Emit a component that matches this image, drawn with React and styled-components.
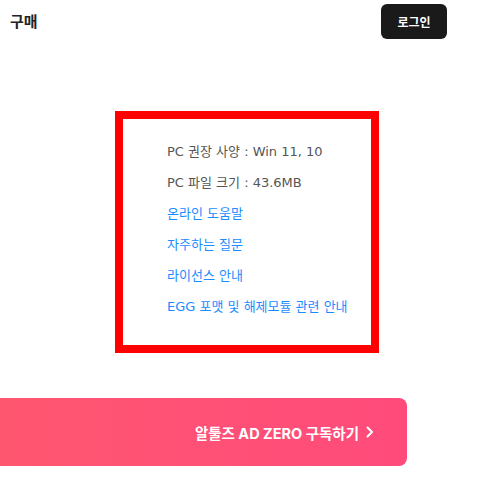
import React from 'react'
import styled, { createGlobalStyle } from 'styled-components'

const GlobalStyle = createGlobalStyle`
  body {
    margin: 0;
    background: #ffffff;
    font-family: "Inter", "Noto Sans CJK KR", sans-serif;
  }
`

const Page = styled.div`
  width: 481px;
  height: 501px;
  display: flex;
  flex-direction: column;
`

const Header = styled.header`
  height: 44px;
  padding: 4px 34px 0 10px;
  box-sizing: border-box;
  display: flex;
  align-items: flex-start;
  justify-content: space-between;
`

const Title = styled.h1`
  margin: 9px 0 0;
  font-size: 15px;
  font-weight: 700;
  color: #222;
  line-height: 18px;
`

const LoginButton = styled.button`
  width: 66px;
  height: 35px;
  border: 0;
  border-radius: 6px;
  background: #1a1a1a;
  color: #fff;
  font-family: inherit;
  font-size: 12px;
  font-weight: 700;
  cursor: pointer;
`

const InfoBox = styled.div`
  margin: 67px 0 0 115px;
  width: 264px;
  height: 242px;
  box-sizing: border-box;
  border: 8px solid #ff0000;
  padding: 23px 0 0 44px;
`

const InfoList = styled.ul`
  list-style: none;
  margin: 0;
  padding: 0;
  display: flex;
  flex-direction: column;
  gap: 11px;
`

const Item = styled.li`
  font-family: "DejaVu Sans", "Noto Sans CJK KR", sans-serif;
  font-size: 13px;
  line-height: 20px;
  color: ${p => (p.$link ? '#1a8cff' : '#555')};
  white-space: nowrap;
`

const Subscribe = styled.button`
  margin-top: 45px;
  width: 407px;
  height: 68px;
  border: 0;
  border-radius: 0 8px 8px 0;
  background: linear-gradient(90deg, #ff5670 0%, #ff4b7b 100%);
  color: #fff;
  font-family: inherit;
  font-size: 14.5px;
  font-weight: 700;
  display: flex;
  align-items: center;
  justify-content: flex-end;
  gap: 7px;
  padding: 0 33px 0 0;
  cursor: pointer;
`

const Chevron = () => (
  <svg width="8" height="12" viewBox="0 0 8 12" fill="none">
    <path d="M1.5 1.5L6 6l-4.5 4.5" stroke="#fff" strokeWidth="2" strokeLinecap="round" strokeLinejoin="round" />
  </svg>
)

const items = [
  { text: 'PC 권장 사양 : Win 11, 10' },
  { text: 'PC 파일 크기 : 43.6MB' },
  { text: '온라인 도움말', link: true },
  { text: '자주하는 질문', link: true },
  { text: '라이선스 안내', link: true },
  { text: 'EGG 포맷 및 해제모듈 관련 안내', link: true },
]

export default function App() {
  return (
    <Page>
      <GlobalStyle />
      <Header>
        <Title>구매</Title>
        <LoginButton>로그인</LoginButton>
      </Header>
      <InfoBox>
        <InfoList>
          {items.map(item => (
            <Item key={item.text} $link={item.link}>{item.text}</Item>
          ))}
        </InfoList>
      </InfoBox>
      <Subscribe>
        알툴즈 AD ZERO 구독하기
        <Chevron />
      </Subscribe>
    </Page>
  )
}
